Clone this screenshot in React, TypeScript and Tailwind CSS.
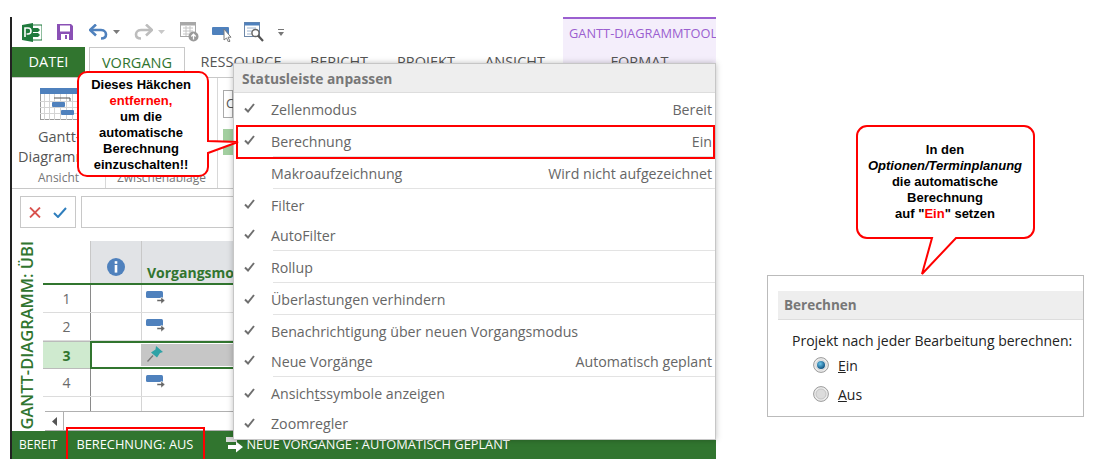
import React from 'react';

const menuItems = [
  { label: 'Zellenmodus', value: 'Bereit', checked: true, sep: false, h: 'h-[33px]', pad: 'pt-[1px]' },
  { label: 'Berechnung', value: 'Ein', checked: true, sep: true, h: 'h-[31px]', pad: 'pt-[1px]' },
  { label: 'Makroaufzeichnung', value: 'Wird nicht aufgezeichnet', checked: false, sep: true, h: 'h-[32px]', pad: 'pt-[3px]' },
  { label: 'Filter', value: '', checked: true, sep: false, h: 'h-[31px]', pad: 'pt-[3px]' },
  { label: 'AutoFilter', value: '', checked: true, sep: true, h: 'h-[31px]', pad: 'pt-[1px]' },
  { label: 'Rollup', value: '', checked: true, sep: true, h: 'h-[32px]', pad: 'pt-[3px]' },
  { label: 'Überlastungen verhindern', value: '', checked: true, sep: true, h: 'h-[32px]', pad: 'pt-[3px]' },
  { label: 'Benachrichtigung über neuen Vorgangsmodus', value: '', checked: true, sep: false, h: 'h-[31px]', pad: 'pt-[3px]' },
  { label: 'Neue Vorgänge', value: 'Automatisch geplant', checked: true, sep: true, h: 'h-[31px]', pad: 'pt-[1px]' },
  { label: 'Ansichtssymbole anzeigen', value: '', checked: true, sep: false, h: 'h-[32px]', pad: 'pt-[3px]' },
  { label: 'Zoomregler', value: '', checked: true, sep: false, h: 'h-[30px]', pad: 'pt-[1px]' },
];

const CheckMark = () => (
  <svg width="11" height="10" viewBox="0 0 11 10" className="shrink-0">
    <path d="M1 5.5 L4 8.5 L10 1" fill="none" stroke="#6f6f6f" strokeWidth="2" />
  </svg>
);

const ProjectLogo = () => (
  <svg width="20" height="19" viewBox="0 0 20 19">
    <rect x="8" y="2" width="12" height="15" fill="#fff" stroke="#1f7a3d" />
    <path d="M11 5h5l2 2-2 2h-5zM11 10h5l2 2-2 2h-5z" fill="#1f7a3d" />
    <path d="M0 2 L11 0 V19 L0 17Z" fill="#1f7a3d" />
    <path d="M3 14V5h3a2.5 2.5 0 0 1 0 6H4.6" fill="none" stroke="#fff" strokeWidth="1.6" />
  </svg>
);

const SaveIcon = () => (
  <svg width="16" height="16" viewBox="0 0 16 16">
    <path d="M0 0H14L16 2V16H0Z" fill="#8a50b5" />
    <rect x="3" y="1.5" width="10" height="6" fill="#fff" />
    <rect x="4" y="10" width="8" height="6" fill="#fff" />
    <rect x="8" y="11" width="2" height="4" fill="#8a50b5" />
  </svg>
);

const UndoIcon = ({ color }: { color: string }) => (
  <svg width="19" height="16" viewBox="0 0 19 16">
    <path d="M2 6H12C16 6 17 9 17 10.5C17 13 15 14.5 12 14.5" fill="none" stroke={color} strokeWidth="2.6" />
    <path d="M7 0.5L1 6L7 11.5" fill="none" stroke={color} strokeWidth="2.6" />
  </svg>
);

const Caret = ({ color = '#7a7a7a' }: { color?: string }) => (
  <svg width="7" height="4" viewBox="0 0 7 4">
    <path d="M0 0H7L3.5 4Z" fill={color} />
  </svg>
);

const CustomizeCaret = () => (
  <svg width="6" height="7" viewBox="0 0 6 7">
    <path d="M0 0.5H6" stroke="#777" />
    <path d="M0 3H6L3 7Z" fill="#777" />
  </svg>
);

const RecalcIcon = () => (
  <svg width="19" height="20" viewBox="0 0 19 20">
    <rect x="0.5" y="0.5" width="15" height="14" fill="#fff" stroke="#a8a8a8" />
    <rect x="0.5" y="0.5" width="15" height="3" fill="#a8a8a8" />
    <path d="M3 6h10M3 9h10M3 12h6M6 4v10M10 4v8" stroke="#c4c4c4" />
    <circle cx="13.5" cy="14.5" r="5" fill="#9a9a9a" />
    <path d="M13.5 17.5v-5M11.3 14.5l2.2-2.4 2.2 2.4" fill="none" stroke="#fff" strokeWidth="1.3" />
  </svg>
);

const InspectIcon = () => (
  <svg width="20" height="20" viewBox="0 0 20 20">
    <rect x="0" y="5" width="17" height="8" rx="1" fill="#4f81bd" />
    <path d="M12 7V18L14.5 16L16.5 20L18 19.2L16 15.2H19Z" fill="#fff" stroke="#7a7a7a" />
  </svg>
);

const FindTableIcon = () => (
  <svg width="20" height="21" viewBox="0 0 20 21">
    <rect x="0.5" y="0.5" width="15" height="14" fill="#fff" stroke="#6d87a8" />
    <rect x="0.5" y="0.5" width="15" height="3" fill="#4f81bd" />
    <path d="M3 6h9M3 9h5M3 12h4" stroke="#9eb4cf" />
    <circle cx="11.5" cy="11" r="3.6" fill="#fff" stroke="#666" strokeWidth="1.5" />
    <path d="M14 13.5L19 19" stroke="#555" strokeWidth="2.2" />
  </svg>
);

const GanttIcon = () => (
  <svg width="38" height="32" viewBox="0 0 38 32">
    <rect x="0.5" y="0.5" width="37" height="31" fill="#fff" stroke="#9a9a9a" />
    <rect x="0" y="0" width="38" height="6" fill="#4f81bd" />
    <path d="M4.5 6v26M9.5 6v26M14.5 6v26M20.5 6v26M26.5 6v26M32.5 6v26M0 13.5h38M0 19.5h38M0 25.5h38" stroke="#d4d4d4" />
    <path d="M14 10H30V13" fill="none" stroke="#555" />
    <rect x="12" y="14" width="13" height="5" rx="1" fill="#4f81bd" />
    <rect x="21" y="22" width="13" height="5" rx="1" fill="#4f81bd" />
  </svg>
);

const TaskIcon = () => (
  <svg width="19" height="13" viewBox="0 0 19 13">
    <rect x="0" y="0" width="17" height="7" rx="1.5" fill="#4f81bd" />
    <path d="M11 8.5h4V6l4 3.5-4 3.5v-2.5h-4z" fill="#666" stroke="#fff" strokeWidth="0.5" />
  </svg>
);

const PinIcon = () => (
  <svg width="16" height="16" viewBox="0 0 16 16">
    <path d="M0.5 15.5L6 9.5" stroke="#777" strokeWidth="1.3" />
    <path d="M9 0L16 6L13 7L10 11.5L4 6.5L8.5 3.5Z" fill="#2ea2a6" />
  </svg>
);

const InfoIcon = () => (
  <svg width="18" height="18" viewBox="0 0 18 18">
    <circle cx="9" cy="9" r="9" fill="#4f81bd" />
    <rect x="7.7" y="3.2" width="2.6" height="2.6" fill="#fff" />
    <rect x="7.7" y="7" width="2.6" height="7.6" fill="#fff" />
  </svg>
);

const Radio = ({ on }: { on: boolean }) => (
  <svg width="16" height="16" viewBox="0 0 16 16">
    <defs>
      <radialGradient id="radioDot" cx="0.4" cy="0.35" r="0.7">
        <stop offset="0" stopColor="#6cc6ec" />
        <stop offset="1" stopColor="#0a4a78" />
      </radialGradient>
    </defs>
    <circle cx="8" cy="8" r="7.4" fill="#ececec" stroke="#9a9a9a" />
    <circle cx="8" cy="8" r="5" fill={on ? '#fff' : '#dcdcdc'} stroke={on ? '#d0d0d0' : '#c4c4c4'} />
    {on && <circle cx="8" cy="8" r="4" fill="url(#radioDot)" />}
  </svg>
);

const TableRow = ({ num }: { num: string }) => (
  <div className="flex h-[28px] border-b border-[#dcdcdc]">
    <div className="flex w-[47px] items-center justify-center text-[14px] text-[#6a6a6a]">{num}</div>
    <div className="w-[51px] border-l border-[#8a8a8a]" />
    <div className="flex-1 border-l border-[#d4d4d4] pl-[4px] pt-[6px]">
      <TaskIcon />
    </div>
  </div>
);

const Tab = ({ label, w }: { label: string; w: string }) => (
  <div className={`${w} flex shrink-0 items-center justify-center text-[14.5px] text-[#555]`}>{label}</div>
);

const UndoFlip = () => (
  <div className="-scale-x-100">
    <UndoIcon color="#bdbdbd" />
  </div>
);

const App = () => {
  return (
    <div className="relative flex h-[472px] w-[1097px] overflow-hidden bg-white font-['Open_Sans',sans-serif]">
      {/* Project window */}
      <div className="ml-[10px] mt-[17px] flex h-[442px] w-[706px] shrink-0 flex-col border-l-2 border-[#222]">
        {/* Quick access bar */}
        <div className="relative flex h-[30px] shrink-0 items-center pl-[10px]">
          <ProjectLogo />
          <div className="ml-[15px]"><SaveIcon /></div>
          <div className="ml-[16px]"><UndoIcon color="#4f81bd" /></div>
          <div className="ml-[5px]"><Caret /></div>
          <div className="ml-[14px]"><UndoFlip /></div>
          <div className="ml-[5px]"><Caret color="#c8c8c8" /></div>
          <div className="ml-[15px]"><RecalcIcon /></div>
          <div className="ml-[13px]"><InspectIcon /></div>
          <div className="ml-[12px]"><FindTableIcon /></div>
          <div className="ml-[14px]"><CustomizeCaret /></div>
          <div className="absolute bottom-[-16px] left-[551px] top-0 flex w-[153px] justify-start overflow-hidden border-t-2 border-[#9b5fd0] bg-[#f4eefb] pl-[6px] pt-[5px] text-[12.8px] whitespace-nowrap text-[#9b5fd0]">
            GANTT-DIAGRAMMTOOLS
          </div>
        </div>

        {/* Tabs */}
        <div className="relative flex h-[31px] shrink-0 border-b border-[#c8c8c8]">
          <div className="flex w-[73px] shrink-0 items-center justify-center bg-[#31752f] text-[14.5px] text-white">DATEI</div>
          <div className="ml-[4px] flex h-[31px] w-[96px] shrink-0 items-center justify-center border border-b-0 border-[#c8c8c8] bg-white text-[14.5px] text-[#31752f]">VORGANG</div>
          <Tab label="RESSOURCE" w="w-[112px]" />
          <Tab label="BERICHT" w="w-[84px]" />
          <Tab label="PROJEKT" w="w-[90px]" />
          <Tab label="ANSICHT" w="w-[88px]" />
          <div className="ml-[4px] flex w-[153px] shrink-0 items-center justify-center bg-[#f4eefb] text-[14.5px] text-[#555]">FORMAT</div>
        </div>

        {/* Ribbon */}
        <div className="flex h-[111px] shrink-0 border-b border-[#c8c8c8]">
          <div className="flex w-[94px] flex-col items-center border-r border-[#d8d8d8]">
            <div className="mt-[10px]"><GanttIcon /></div>
            <div className="mt-[7px] self-start whitespace-nowrap text-[14.5px] leading-[20px] text-[#555]">
              <div className="ml-[26px]">Gantt-</div>
              <div className="ml-[6px]">Diagramm</div>
            </div>
            <div className="mt-auto pb-[2px] text-[12px] leading-[16px] text-[#777]">Ansicht</div>
          </div>
          <div className="flex w-[112px] flex-col items-center border-r border-[#d8d8d8]">
            <div className="mt-auto pb-[2px] text-[12px] leading-[16px] text-[#777]">Zwischenablage</div>
          </div>
          <div className="ml-[5px] flex w-[10px] flex-col pt-[12px]">
            <div className="flex h-[28px] items-center border border-[#aaa] pl-[2px] text-[13px] text-[#555]">C</div>
            <div className="mt-[11px] h-[26px] bg-[#a3cfa0]" />
          </div>
        </div>

        {/* Entry bar */}
        <div className="flex h-[52px] shrink-0 items-center gap-[5px] pl-[8px] pb-[8px] pt-[2px]">
          <div className="flex h-[32px] w-[56px] items-center justify-center gap-[12px] border border-[#c8c8c8]">
            <svg width="12" height="11" viewBox="0 0 12 11"><path d="M1 0.5L11 10.5M11 0.5L1 10.5" stroke="#d9534f" strokeWidth="1.8" /></svg>
            <svg width="14" height="11" viewBox="0 0 14 11"><path d="M1 6L5 10L13 1" fill="none" stroke="#2f7ebd" strokeWidth="2" /></svg>
          </div>
          <div className="h-[32px] flex-1 border border-[#c8c8c8]" />
        </div>

        {/* Sheet with vertical view name */}
        <div className="flex min-h-0 flex-1">
          <div className="flex h-[189px] w-[31px] shrink-0 items-end justify-center overflow-hidden pr-[2px]">
            <span className="whitespace-nowrap text-[16.5px] leading-[20px] font-semibold text-[#31752f] [writing-mode:vertical-rl] rotate-180">GANTT-DIAGRAMM: ÜBI</span>
          </div>
          <div className="flex flex-1 flex-col">
            <div className="flex h-[44px] shrink-0 border-b-2 border-[#31752f]">
              <div className="w-[47px] bg-white" />
              <div className="flex w-[51px] items-center justify-center border-l border-[#c8c8c8] bg-[#e1e3e6] pt-[10px]"><InfoIcon /></div>
              <div className="flex flex-1 items-end overflow-hidden whitespace-nowrap border-l border-[#c8c8c8] bg-[#e1e3e6] pl-[5px] text-[14px] font-bold text-[#31752f]">Vorgangsmodus</div>
            </div>
            <TableRow num="1" />
            <TableRow num="2" />
            <div className="flex h-[29px]">
              <div className="flex w-[47px] items-center justify-center border-y border-[#bbb] bg-[#cfeacf] text-[14px] font-bold text-[#31752f]">3</div>
              <div className="flex flex-1 border-2 border-[#31752f]">
                <div className="w-[49px] bg-white" />
                <div className="my-px flex-1 bg-[#c6c6c6] pl-[6px] pt-[2px]"><PinIcon /></div>
              </div>
            </div>
            <TableRow num="4" />
            <div className="flex h-[14px]">
              <div className="w-[47px]" />
              <div className="w-[51px] border-l border-[#8a8a8a]" />
              <div className="flex-1 border-l border-[#d4d4d4]" />
            </div>
            <div className="ml-[2px] flex h-[20px] border-y border-[#b0b0b0]">
              <div className="flex w-[19px] items-center justify-center border-r border-[#b0b0b0]">
                <svg width="5" height="9" viewBox="0 0 5 9"><path d="M5 0V9L0 4.5Z" fill="#555" /></svg>
              </div>
            </div>
          </div>
        </div>

        {/* Status bar */}
        <div className="relative flex h-[28px] shrink-0 items-center bg-[#31752f] pl-[7px] text-[12.8px] text-white">
          <span className="text-[12px]">BEREIT</span>
          <span className="ml-[19px]">BERECHNUNG: AUS</span>
          <svg width="18" height="16" viewBox="0 0 18 16" className="ml-[33px]">
            <rect x="0" y="0" width="11" height="5" fill="#d8d8d8" />
            <path d="M2 8h8V4.5l7 5.5-7 5.5V12H2z" fill="#fff" />
          </svg>
          <span className="ml-[2px]">NEUE VORGÄNGE : AUTOMATISCH GEPLANT</span>
          <div className="absolute bottom-0 left-[54px] top-[-4px] w-[139px] border-2 border-b-0 border-[#ff0000]" />
        </div>
      </div>

      {/* Options panel */}
      <div className="ml-[51px] mt-[275px] h-[142px] w-[317px] shrink-0 border border-[#bbbbbb] pl-[10px] pt-[15px] text-[14px] text-[#222]">
        <div className="flex h-[29px] items-center border-b border-[#dddddd] bg-[#eeeeee] pl-[6px] text-[13.5px] font-bold text-[#777]">Berechnen</div>
        <div className="ml-[14px] mt-[11px] leading-[20px] whitespace-nowrap">Projekt nach jeder Bearbeitung berechnen:</div>
        <div className="ml-[35px] mt-[4px] flex h-[20px] items-center gap-[9px]">
          <Radio on />
          <span><span className="underline">E</span>in</span>
        </div>
        <div className="ml-[35px] mt-[9px] flex h-[20px] items-center gap-[9px]">
          <Radio on={false} />
          <span><span className="underline">A</span>us</span>
        </div>
      </div>

      {/* Status bar menu */}
      <div className="absolute left-[233px] top-[63px] flex h-[377px] w-[483px] flex-col border border-[#c6c6c6] bg-white text-[14.2px] text-[#666] shadow-[0_0_6px_rgba(0,0,0,0.25)]">
        <div className="flex h-[29px] shrink-0 items-center border-b border-[#dddddd] bg-[#eeeeee] pl-[8px] pt-[2px] text-[13.8px] font-bold text-[#777]">Statusleiste anpassen</div>
        {menuItems.map((item) => (
          <div key={item.label} className={`${item.h} flex shrink-0 flex-col`}>
            <div className={`${item.pad} flex flex-1 items-center pr-[3px]`}>
              <div className="flex w-[37px] justify-end pr-[16px] pb-[3px]">{item.checked && <CheckMark />}</div>
              <span>{item.label === 'Ansichtssymbole anzeigen' ? <>Ansich<span className="underline">t</span>ssymbole anzeigen</> : item.label}</span>
              <span className="ml-auto">{item.value}</span>
            </div>
            <div className={`ml-[39px] h-px ${item.sep ? 'bg-[#e3e3e3]' : 'bg-transparent'}`} />
          </div>
        ))}
      </div>

      {/* Red frame around Berechnung */}
      <div className="absolute left-[236px] top-[125px] h-[34px] w-[479px] border-2 border-[#ff0000]" />

      {/* Callout left */}
      <div className="absolute left-[78px] top-[72px] flex h-[105px] w-[130px] flex-col items-center justify-center pr-[4px] font-['Liberation_Sans',sans-serif] text-[13px] leading-[16px] font-bold text-black">
        <svg width="164" height="107" viewBox="0 0 164 107" className="absolute left-[-1px] top-[-1px]">
          <path d="M10 1H122A9 9 0 0 1 131 10V70L161 71L131 82V96A9 9 0 0 1 122 105H10A9 9 0 0 1 1 96V10A9 9 0 0 1 10 1Z" fill="#fff" stroke="#ff0000" strokeWidth="2" />
        </svg>
        <div className="relative text-center">
          <div>Dieses Häkchen</div>
          <div className="text-[#ff0000]">entfernen,</div>
          <div>um die</div>
          <div>automatische</div>
          <div>Berechnung</div>
          <div>einzuschalten!!</div>
        </div>
      </div>

      {/* Callout right */}
      <div className="absolute left-[857px] top-[126px] flex h-[112px] w-[177px] flex-col items-center justify-center pr-[1px] font-['Liberation_Sans',sans-serif] text-[13px] leading-[16px] font-bold text-black">
        <svg width="179" height="152" viewBox="0 0 179 152" className="absolute left-[-1px] top-[-1px]">
          <path d="M11 1H168A10 10 0 0 1 178 11V103A10 10 0 0 1 168 113H100L66 149L76 113H11A10 10 0 0 1 1 103V11A10 10 0 0 1 11 1Z" fill="#fff" stroke="#ff0000" strokeWidth="2" />
        </svg>
        <div className="relative text-center">
          <div>In den</div>
          <div className="italic">Optionen/Terminplanung</div>
          <div>die automatische</div>
          <div>Berechnung</div>
          <div>auf "<span className="text-[#ff0000]">Ein</span>" setzen</div>
        </div>
      </div>
    </div>
  );
};

export default App;
